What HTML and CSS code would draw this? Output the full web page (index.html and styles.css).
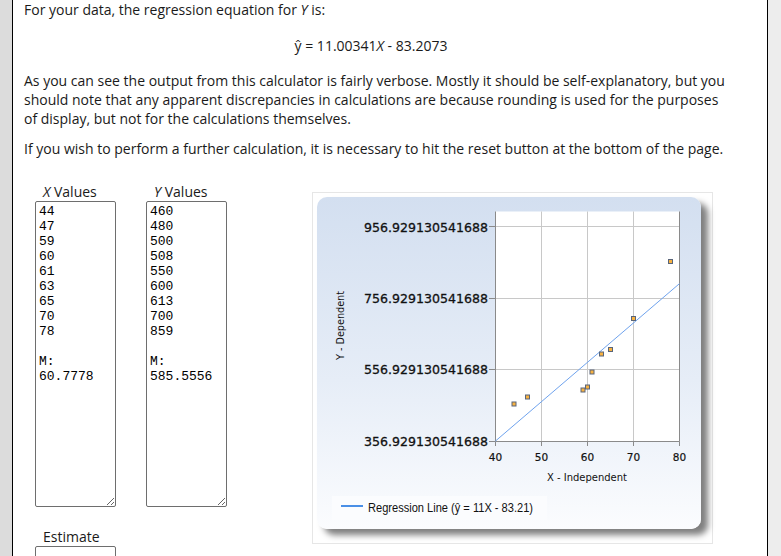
FILE: index.html
```html
<!DOCTYPE html>
<html lang="en">
<head>
<meta charset="utf-8">
<title>Regression Calculator</title>
<link rel="stylesheet" href="styles.css">
</head>
<body>
<div class="page">
  <div class="gutter-left"></div>
  <main class="main">
    <p class="lead">For your data, the regression equation for <i>Y</i> is:</p>
    <p class="eq">ŷ = 11.00341<i>X</i> - 83.2073</p>
    <p class="note">As you can see the output from this calculator is fairly verbose. Mostly it should be self-explanatory, but you should note that any apparent discrepancies in calculations are because rounding is used for the purposes of display, but not for the calculations themselves.</p>
    <p>If you wish to perform a further calculation, it is necessary to hit the reset button at the bottom of the page.</p>

    <div class="calc">
      <div class="inputs">
        <div class="cols">
          <div class="field">
            <label class="field-label"><i>X</i> Values</label>
            <textarea class="values" readonly>44
47
59
60
61
63
65
70
78

M:
60.7778</textarea>
          </div>
          <div class="field">
            <label class="field-label"><i>Y</i> Values</label>
            <textarea class="values" readonly>460
480
500
508
550
600
613
700
859

M:
585.5556</textarea>
          </div>
        </div>
        <div class="estimate">
          <label class="field-label">Estimate</label>
          <div class="est-box"></div>
        </div>
      </div>

      <div class="chart">
        <div class="chart-panel">
          <svg class="plot" width="384" height="332" viewBox="0 0 384 332">
            <rect class="plot-bg" x="178.5" y="14.5" width="184" height="230"/>
            <g class="grid">
              <line x1="178.5" y1="29.5" x2="362.5" y2="29.5"/>
              <line x1="178.5" y1="101.5" x2="362.5" y2="101.5"/>
              <line x1="178.5" y1="172.5" x2="362.5" y2="172.5"/>
              <line x1="224.5" y1="14.5" x2="224.5" y2="244.5"/>
              <line x1="270.5" y1="14.5" x2="270.5" y2="244.5"/>
              <line x1="316.5" y1="14.5" x2="316.5" y2="244.5"/>
            </g>
            <g class="axis">
              <line x1="178.5" y1="14.5" x2="178.5" y2="244.5"/>
              <line x1="178.5" y1="244.5" x2="362.5" y2="244.5"/>
              <line x1="362.5" y1="14.5" x2="362.5" y2="244.5"/>
              <line x1="172" y1="29.5" x2="178.5" y2="29.5"/>
              <line x1="172" y1="101.5" x2="178.5" y2="101.5"/>
              <line x1="172" y1="172.5" x2="178.5" y2="172.5"/>
              <line x1="172" y1="244.5" x2="178.5" y2="244.5"/>
              <line x1="178.5" y1="244.5" x2="178.5" y2="249"/>
              <line x1="224.5" y1="244.5" x2="224.5" y2="249"/>
              <line x1="270.5" y1="244.5" x2="270.5" y2="249"/>
              <line x1="316.5" y1="244.5" x2="316.5" y2="249"/>
              <line x1="362.5" y1="244.5" x2="362.5" y2="249"/>
            </g>
            <g class="tick-y">
              <text x="171" y="34.5" textLength="124" lengthAdjust="spacingAndGlyphs">956.929130541688</text>
              <text x="171" y="106" textLength="124" lengthAdjust="spacingAndGlyphs">756.929130541688</text>
              <text x="171" y="177" textLength="124" lengthAdjust="spacingAndGlyphs">556.929130541688</text>
              <text x="171" y="249" textLength="124" lengthAdjust="spacingAndGlyphs">356.929130541688</text>
            </g>
            <g class="tick-x">
              <text x="178.5" y="263.5">40</text>
              <text x="224.5" y="263.5">50</text>
              <text x="270.5" y="263.5">60</text>
              <text x="316.5" y="263.5">70</text>
              <text x="362.5" y="263.5">80</text>
            </g>
            <text class="axis-title" x="270" y="284" textLength="80" lengthAdjust="spacingAndGlyphs">X - Independent</text>
            <text class="axis-title" transform="translate(26.5 128.5) rotate(-90)" textLength="69" lengthAdjust="spacingAndGlyphs">Y - Dependent</text>
            <line class="reg" x1="178.5" y1="244" x2="362.5" y2="86.6"/>
            <g class="pts">
              <rect x="195" y="205" width="4" height="4"/>
              <rect x="208.5" y="198" width="4" height="4"/>
              <rect x="264" y="191" width="4" height="4"/>
              <rect x="268.5" y="188" width="4" height="4"/>
              <rect x="273" y="173" width="4" height="4"/>
              <rect x="282.5" y="155" width="4" height="4"/>
              <rect x="291.5" y="150.5" width="4" height="4"/>
              <rect x="314.5" y="119.5" width="4" height="4"/>
              <rect x="351.5" y="62.5" width="4" height="4"/>
            </g>
            <rect class="legend-bg" x="15" y="299" width="215" height="24"/>
            <line class="legend-line" x1="24" y1="309" x2="46" y2="309"/>
            <text class="legend-text" x="51" y="314.5" textLength="165" lengthAdjust="spacingAndGlyphs">Regression Line (ŷ = 11X - 83.21)</text>
          </svg>
        </div>
      </div>
    </div>
  </main>
  <div class="gutter-right"></div>
</div>
</body>
</html>
```

FILE: styles.css
```css
html, body {
  margin: 0;
  height: 100%;
  overflow: hidden;
}

body {
  font-family: "Open Sans", "Liberation Sans", sans-serif;
  font-size: 14px;
  color: #1a1a1a;
  background: #fff;
}

.page {
  display: flex;
  min-height: 100vh;
}

.gutter-left {
  flex: none;
  width: 12px;
  background: #dcdcdc;
}

.gutter-right {
  flex: none;
  width: 13px;
  background: #ededed;
}

.main {
  flex: 1;
  min-width: 0;
  border-left: 1px solid #000;
  border-right: 1px solid #000;
  padding: 0 32px 0 11px;
}

p {
  margin: 0;
}

.lead {
  margin-bottom: 17px;
}

.eq {
  text-align: center;
  padding-right: 17px;
  margin-bottom: 16px;
}

.note {
  margin-bottom: 11px;
}

.calc {
  display: flex;
  align-items: flex-start;
  margin-top: 24px;
  padding-left: 11px;
}

.inputs {
  flex: none;
}

.cols {
  display: flex;
  gap: 30px;
}

.field-label {
  display: block;
  padding-left: 8px;
  line-height: 19px;
}

.values {
  display: block;
  box-sizing: border-box;
  width: 81px;
  height: 306px;
  margin: 0;
  padding: 2px 2px 2px 3px;
  border: 1px solid #6e6e6e;
  border-radius: 2px;
  font-family: "Liberation Mono", monospace;
  font-size: 13px;
  line-height: 15px;
  color: #000;
  background: #fff;
}

.estimate {
  margin-top: 20px;
}

.est-box {
  box-sizing: border-box;
  width: 81px;
  height: 30px;
  border: 1px solid #6e6e6e;
  border-radius: 2px;
}

.chart {
  flex: none;
  box-sizing: border-box;
  width: 401px;
  height: 352px;
  margin: 10px 0 0 85px;
  padding: 4px;
  border: 1px solid #e6e6e6;
  background: #fff;
}

.chart-panel {
  width: 384px;
  height: 332px;
  border-radius: 10px;
  background: linear-gradient(#d3dff0, #e6edf7 55%, #fbfcfe);
  box-shadow: 7px 6px 6px rgba(0, 0, 0, 0.5);
}

.plot {
  display: block;
}

.plot-bg {
  fill: #fff;
}

.grid line {
  stroke: #c8c8c8;
  stroke-width: 1;
}

.axis line {
  stroke: #8a8a8a;
  stroke-width: 1;
}

.tick-y text {
  font-family: "DejaVu Sans", sans-serif;
  font-size: 13px;
  fill: #111;
  stroke: #111;
  stroke-width: 0.3px;
  text-anchor: end;
}

.tick-x text {
  font-family: "DejaVu Sans", sans-serif;
  font-size: 10.5px;
  fill: #111;
  stroke: #111;
  stroke-width: 0.2px;
  text-anchor: middle;
}

.axis-title {
  font-family: "DejaVu Sans", sans-serif;
  font-size: 11px;
  fill: #111;
  text-anchor: middle;
}

.reg {
  stroke: #6fa3ee;
  stroke-width: 1;
}

.pts rect {
  fill: #f7b140;
  stroke: #59657a;
  stroke-width: 1;
}

.legend-bg {
  fill: #fbfcfe;
}

.legend-line {
  stroke: #4a8fe6;
  stroke-width: 2;
}

.legend-text {
  font-family: "Liberation Sans", sans-serif;
  font-size: 12.5px;
  fill: #111;
}
```
